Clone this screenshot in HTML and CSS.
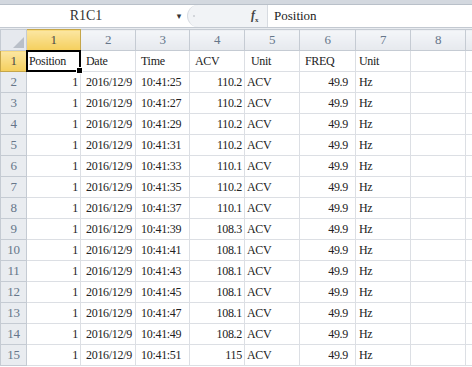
FILE: index.html
```html
<!DOCTYPE html>
<html>
<head>
<meta charset="utf-8">
<link rel="stylesheet" href="styles.css">
</head>
<body>
<div class="app">
  <div class="topstrip"></div>
  <div class="fbar">
    <div class="namebox">
      <span class="name">R1C1</span>
      <span class="drop">▾</span>
    </div>
    <div class="tools">
      <span class="grip"></span>
      <span class="fx"><i>f</i><sub>x</sub></span>
    </div>
    <div class="finput">Position</div>
  </div>
  <div class="gap"></div>
  <table class="sheet">
    <colgroup>
      <col class="c0"><col class="c1"><col class="c2"><col class="c3"><col class="c4"><col class="c5"><col class="c6"><col class="c7"><col class="c8"><col class="c9">
    </colgroup>
    <thead>
      <tr>
        <th class="corner"><span class="tri"></span></th>
        <th class="sel">1</th><th>2</th><th>3</th><th>4</th><th>5</th><th>6</th><th>7</th><th>8</th><th></th>
      </tr>
    </thead>
    <tbody>
      <tr>
        <th class="sel">1</th>
        <td class="active">Position<span class="selbox"><span class="handle"></span></span></td>
        <td class="date">Date</td><td class="l">Time</td><td class="l">ACV</td><td class="l hd5">Unit</td><td class="l">FREQ</td><td class="l u">Unit</td><td></td><td></td>
      </tr>
      <tr><th>2</th><td class="r">1</td><td class="date">2016/12/9</td><td class="l">10:41:25</td><td class="r">110.2</td><td class="l acv">ACV</td><td class="r fq">49.9</td><td class="l u">Hz</td><td></td><td></td></tr>
      <tr><th>3</th><td class="r">1</td><td class="date">2016/12/9</td><td class="l">10:41:27</td><td class="r">110.2</td><td class="l acv">ACV</td><td class="r fq">49.9</td><td class="l u">Hz</td><td></td><td></td></tr>
      <tr><th>4</th><td class="r">1</td><td class="date">2016/12/9</td><td class="l">10:41:29</td><td class="r">110.2</td><td class="l acv">ACV</td><td class="r fq">49.9</td><td class="l u">Hz</td><td></td><td></td></tr>
      <tr><th>5</th><td class="r">1</td><td class="date">2016/12/9</td><td class="l">10:41:31</td><td class="r">110.2</td><td class="l acv">ACV</td><td class="r fq">49.9</td><td class="l u">Hz</td><td></td><td></td></tr>
      <tr><th>6</th><td class="r">1</td><td class="date">2016/12/9</td><td class="l">10:41:33</td><td class="r">110.1</td><td class="l acv">ACV</td><td class="r fq">49.9</td><td class="l u">Hz</td><td></td><td></td></tr>
      <tr><th>7</th><td class="r">1</td><td class="date">2016/12/9</td><td class="l">10:41:35</td><td class="r">110.2</td><td class="l acv">ACV</td><td class="r fq">49.9</td><td class="l u">Hz</td><td></td><td></td></tr>
      <tr><th>8</th><td class="r">1</td><td class="date">2016/12/9</td><td class="l">10:41:37</td><td class="r">110.1</td><td class="l acv">ACV</td><td class="r fq">49.9</td><td class="l u">Hz</td><td></td><td></td></tr>
      <tr><th>9</th><td class="r">1</td><td class="date">2016/12/9</td><td class="l">10:41:39</td><td class="r">108.3</td><td class="l acv">ACV</td><td class="r fq">49.9</td><td class="l u">Hz</td><td></td><td></td></tr>
      <tr><th>10</th><td class="r">1</td><td class="date">2016/12/9</td><td class="l">10:41:41</td><td class="r">108.1</td><td class="l acv">ACV</td><td class="r fq">49.9</td><td class="l u">Hz</td><td></td><td></td></tr>
      <tr><th>11</th><td class="r">1</td><td class="date">2016/12/9</td><td class="l">10:41:43</td><td class="r">108.1</td><td class="l acv">ACV</td><td class="r fq">49.9</td><td class="l u">Hz</td><td></td><td></td></tr>
      <tr><th>12</th><td class="r">1</td><td class="date">2016/12/9</td><td class="l">10:41:45</td><td class="r">108.1</td><td class="l acv">ACV</td><td class="r fq">49.9</td><td class="l u">Hz</td><td></td><td></td></tr>
      <tr><th>13</th><td class="r">1</td><td class="date">2016/12/9</td><td class="l">10:41:47</td><td class="r">108.1</td><td class="l acv">ACV</td><td class="r fq">49.9</td><td class="l u">Hz</td><td></td><td></td></tr>
      <tr><th>14</th><td class="r">1</td><td class="date">2016/12/9</td><td class="l">10:41:49</td><td class="r">108.2</td><td class="l acv">ACV</td><td class="r fq">49.9</td><td class="l u">Hz</td><td></td><td></td></tr>
      <tr><th>15</th><td class="r">1</td><td class="date">2016/12/9</td><td class="l">10:41:51</td><td class="r">115</td><td class="l acv">ACV</td><td class="r fq">49.9</td><td class="l u">Hz</td><td></td><td></td></tr>
    </tbody>
  </table>
</div>
</body>
</html>
```
FILE: styles.css
```css
html, body {
  margin: 0;
  padding: 0;
  background: #ffffff;
  font-family: "Liberation Serif", "Times New Roman", serif;
}
.app {
  width: 472px;
  height: 367px;
  overflow: hidden;
}
.topstrip {
  height: 4px;
  background: #d3d8df;
  border-bottom: 1px solid #b9c0c9;
}
.fbar {
  display: flex;
  height: 22px;
  background: #ffffff;
  border-bottom: 1px solid #c3c9d1;
}
.namebox {
  width: 187px;
  display: flex;
  align-items: center;
}
.name {
  width: 172px;
  text-align: center;
  font-size: 14px;
  color: #333;
}
.drop {
  font-family: "DejaVu Sans", sans-serif;
  font-size: 9px;
  color: #333;
  width: 14px;
  text-align: center;
}
.tools {
  width: 79px;
  display: flex;
  align-items: center;
  background: #f1f3f6;
  border-radius: 11px 0 0 11px;
  border-left: 1px solid #d7dbe1;
}
.grip {
  width: 2px;
  height: 2px;
  margin-left: 5px;
  background: #c8ccd2;
  border-radius: 1px;
}
.fx {
  margin-left: 56px;
  font-size: 12px;
  color: #444;
  font-weight: bold;
}
.fx sub {
  font-size: 7px;
}
.finput {
  flex: 1;
  display: flex;
  align-items: center;
  padding-left: 6px;
  font-size: 13px;
  color: #222;
  border-left: 1px solid #d7dbe1;
}
.gap {
  height: 1px;
  background: #e9ecf0;
}
.sheet {
  border-collapse: collapse;
  table-layout: fixed;
  width: 485px;
  font-family: "Liberation Serif", "Times New Roman", serif;
  font-size: 12px;
  letter-spacing: -0.3px;
}
.c0 { width: 26px; }
.c1 { width: 54px; }
.c2 { width: 55px; }
.c3 { width: 54px; }
.c4 { width: 55px; }
.c5 { width: 55px; }
.c6 { width: 56px; }
.c7 { width: 55px; }
.c8 { width: 55px; }
.c9 { width: 20px; }
tr {
  height: 21px;
}
th {
  padding: 0;
  font-weight: normal;
  font-size: 13px;
  color: #66768a;
  background: linear-gradient(#f4f6f9, #e6e9ee);
  border: 1px solid #c5cbd3;
  text-align: center;
}
tbody th {
  background: #e9ecf0;
  border-color: #c5cbd3;
}
th.sel {
  background: linear-gradient(#fbe6a2, #f5cf5c);
  color: #4a4a4a;
  border-color: #c5a64a;
}
th.corner {
  position: relative;
  background: #e6e9ee;
}
.tri {
  position: absolute;
  right: 2px;
  bottom: 2px;
  width: 0;
  height: 0;
  border-left: 11px solid transparent;
  border-bottom: 11px solid #b9bfc8;
}
td {
  padding: 0 3px;
  border: 1px solid #dcdfe4;
  color: #222;
  white-space: nowrap;
  overflow: hidden;
}
td.r { text-align: right; padding-right: 2px; }
td.l { text-align: left; padding-left: 5px; }
td.acv { padding-left: 2px; }
td.fq { padding-right: 7px; }
td.u { padding-left: 3px; }
td.date { padding-left: 5px; }
td.hd5 { padding-left: 6px; }
td.active {
  position: relative;
  padding-left: 2px;
  overflow: visible;
}
.selbox {
  position: absolute;
  left: -1px;
  top: -1px;
  right: -1px;
  bottom: -1px;
  border: 2px solid #000;
}
.handle {
  position: absolute;
  right: -4px;
  bottom: -4px;
  width: 5px;
  height: 5px;
  background: #000;
  border: 1px solid #fff;
}
```
